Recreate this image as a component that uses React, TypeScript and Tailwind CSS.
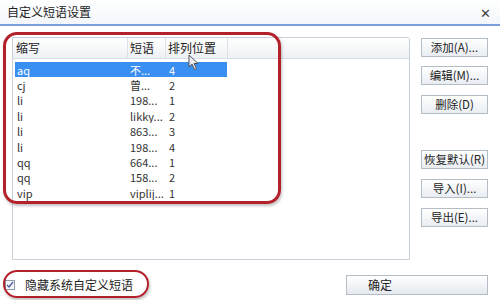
import React from "react";

const rows = [
  { abbr: "aq", text: "不...", pos: "4", selected: true },
  { abbr: "cj", text: "曾...", pos: "2" },
  { abbr: "li", text: "198...", pos: "1" },
  { abbr: "li", text: "likky...", pos: "2" },
  { abbr: "li", text: "863...", pos: "3" },
  { abbr: "li", text: "198...", pos: "4" },
  { abbr: "qq", text: "664...", pos: "1" },
  { abbr: "qq", text: "158...", pos: "2" },
  { abbr: "vip", text: "viplij...", pos: "1" },
];

function SideButton({ label, className = "" }: { label: string; className?: string }) {
  return (
    <button
      className={
        "w-[67px] h-[19px] flex items-center justify-center border border-[#b4bcc6] bg-gradient-to-b from-white to-[#e9edf2] text-[11.5px] leading-none text-[#222] whitespace-nowrap " +
        className
      }
    >
      {label}
    </button>
  );
}

export default function App() {
  return (
    <div
      className="relative w-[500px] h-[300px] bg-white overflow-hidden text-[#222]"
      style={{ fontFamily: '"Noto Sans CJK SC", "Liberation Sans", sans-serif' }}
    >
      {/* title bar */}
      <div className="h-[26px] flex items-center justify-between px-[7px] bg-gradient-to-b from-white to-[#f3f6fa] border-b-2 border-[#7b9fdc]">
        <span className="text-[12px] leading-none">自定义短语设置</span>
        <span className="text-[13px] leading-none text-[#444] pr-[2px]">✕</span>
      </div>

      <div className="flex pl-[12px] pt-[11px]">
        {/* list box */}
        <div className="w-[398px] h-[223px] border border-[#c8d0da] rounded-tr-[2px] bg-white">
          <div className="h-[21px] flex items-center bg-gradient-to-b from-white to-[#eef1f5] border-b border-[#d6dde6] text-[12px] leading-none">
            <div className="w-[115px] h-full flex items-center pl-[3px] border-r border-[#dde3ea]">缩写</div>
            <div className="w-[38px] h-full flex items-center pl-[2px] border-r border-[#dde3ea]">短语</div>
            <div className="w-[62px] h-full flex items-center pl-[2px] border-r border-[#dde3ea]">排列位置</div>
          </div>
          <div className="pt-[3px] pl-[2px]">
            {rows.map((r, i) => (
              <div
                key={i}
                className={
                  "w-[212px] h-[15.4px] overflow-hidden flex items-center text-[11px] leading-[14px] " +
                  (r.selected ? "bg-[#3a8ff3] text-white" : "text-[#333]")
                }
              >
                <div className="w-[113px] pl-[2px]">{r.abbr}</div>
                <div className="w-[38px] pl-[2px] whitespace-nowrap overflow-hidden">{r.text}</div>
                <div className="pl-[3px]">{r.pos}</div>
              </div>
            ))}
          </div>
        </div>

        {/* buttons */}
        <div className="ml-[11px] pt-[1px] flex flex-col">
          <SideButton label="添加(A)..." />
          <SideButton label="编辑(M)..." className="mt-[9px]" />
          <SideButton label="删除(D)" className="mt-[10px]" />
          <SideButton label="恢复默认(R)" className="mt-[36px]" />
          <SideButton label="导入(I)..." className="mt-[10px]" />
          <SideButton label="导出(E)..." className="mt-[10px]" />
        </div>
      </div>

      {/* bottom row */}
      <div className="flex items-center justify-between pl-[5px] pr-[12px] mt-[15px]">
        <label className="flex items-center gap-[4px] text-[12px] leading-none">
          <span className="w-[10px] h-[10px] border border-[#8e9aaa] bg-[#f4f6fa] flex items-center justify-center">
            <svg width="8" height="8" viewBox="0 0 8 8">
              <path d="M1 4 L3 6 L7 1" stroke="#4a5ba8" strokeWidth="1.3" fill="none" />
            </svg>
          </span>
          <span className="ml-[6px]">隐藏系统自定义短语</span>
        </label>
        <button className="w-[142px] h-[20px] border border-[#b4bcc6] bg-gradient-to-b from-white to-[#e4e9ef] text-[12px] leading-none flex items-center pl-[21px]">
          确定
        </button>
      </div>

      {/* red annotations */}
      <div className="absolute left-[3px] top-[32px] w-[278px] h-[172px] border-[3px] border-[#b3212a] rounded-[14px] shadow-[1px_2px_3px_rgba(0,0,0,0.25)] pointer-events-none" />
      <div className="absolute left-[3px] top-[270px] w-[146px] h-[28px] border-[2px] border-[#b3212a] rounded-full shadow-[1px_2px_3px_rgba(0,0,0,0.25)] pointer-events-none" />

      {/* mouse cursor */}
      <svg className="absolute left-[188px] top-[54px]" width="12" height="17" viewBox="0 0 12 17">
        <path d="M1 1 L1 13 L4 10 L6.5 15.5 L8.5 14.5 L6 9.5 L10 9.5 Z" fill="#e8ecf2" stroke="#555" strokeWidth="1" />
      </svg>
    </div>
  );
}
